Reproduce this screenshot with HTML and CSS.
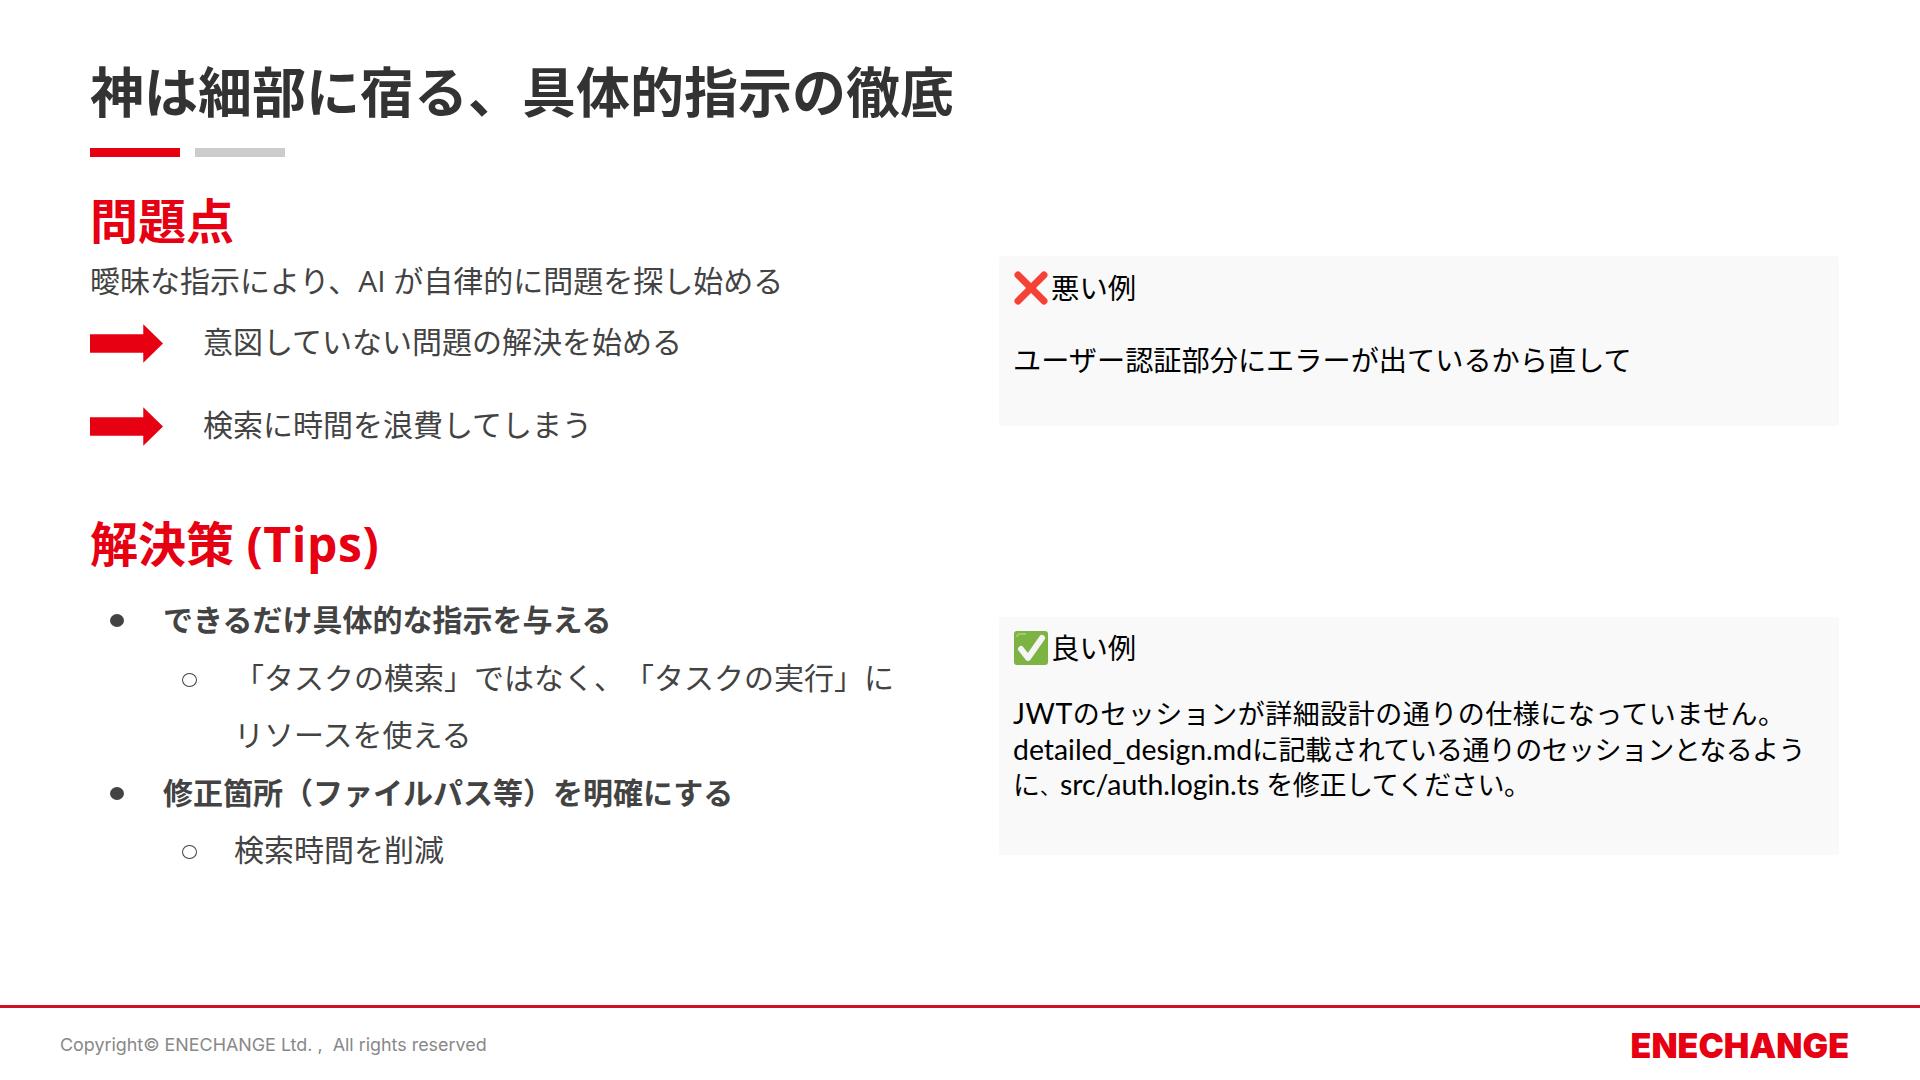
FILE: index.html
```html
<!DOCTYPE html>
<html lang="ja">
<head>
<meta charset="utf-8">
<title>神は細部に宿る、具体的指示の徹底</title>
<link rel="stylesheet" href="styles.css">
</head>
<body>
<div class="slide">
  <header class="head">
    <h1 class="title">神は細部に宿る、具体的指示の徹底</h1>
    <div class="rule"><span class="rule-red"></span><span class="rule-grey"></span></div>
  </header>
  <main class="main">
    <section class="left">
      <h2 class="heading">問題点</h2>
      <p class="lead">曖昧な指示により、AI が自律的に問題を探し始める</p>
      <div class="arrow-row">
        <svg class="arrow" viewBox="0 0 74 39"><path d="M0 10H54V0L74 19.5L54 39V29H0Z"/></svg>
        <span class="arrow-text">意図していない問題の解決を始める</span>
      </div>
      <div class="arrow-row">
        <svg class="arrow" viewBox="0 0 74 39"><path d="M0 10H54V0L74 19.5L54 39V29H0Z"/></svg>
        <span class="arrow-text">検索に時間を浪費してしまう</span>
      </div>
      <h2 class="heading heading-tips">解決策 <span class="latin-head">(Tips)</span></h2>
      <ul class="tips">
        <li class="tip-main">できるだけ具体的な指示を与える</li>
        <li class="tip-sub">「タスクの模索」ではなく、「タスクの実行」にリソースを使える</li>
        <li class="tip-main">修正箇所（ファイルパス等）を明確にする</li>
        <li class="tip-sub">検索時間を削減</li>
      </ul>
    </section>
    <section class="right">
      <div class="box box-bad">
        <div class="box-label">
          <svg class="emoji" viewBox="0 0 34 34"><path d="M4 4L30 30M30 4L4 30" fill="none" stroke="#f44336" stroke-width="7" stroke-linecap="round"/></svg>
          <span>悪い例</span>
        </div>
        <p class="box-text box-text-bad">ユーザー認証部分にエラーが出ているから直して</p>
      </div>
      <div class="box box-good">
        <div class="box-label">
          <svg class="emoji" viewBox="0 0 34 34"><rect width="34" height="34" rx="3" fill="#7cb342"/><path d="M3 6Q3 3 6 3H12" fill="none" stroke="#9ccc65" stroke-width="2"/><path d="M7 18L14 27L28 7" fill="none" stroke="#f5f5f5" stroke-width="6" stroke-linejoin="round" stroke-linecap="round"/></svg>
          <span>良い例</span>
        </div>
        <p class="box-text box-text-good"><span class="line-a"><span class="latin">JWT</span>のセッションが詳細設計の通りの仕様になっていません。</span><br><span class="latin">detailed_design.md</span><span class="line-b">に記載されている通りのセッションとなるよう</span><br>に<span class="tight">、</span><span class="latin">src/auth.login.ts</span> <span class="line-c">を修正してください。</span></p>
      </div>
    </section>
  </main>
  <footer class="foot">
    <span class="copy">Copyright© ENECHANGE Ltd. ,&nbsp; All rights reserved</span>
    <span class="logo">ENECHANGE</span>
  </footer>
</div>
</body>
</html>
```
FILE: styles.css
```css
* { box-sizing: border-box; }
html, body { margin: 0; padding: 0; background: #fff; }
.slide {
  width: 1920px;
  height: 1080px;
  display: flex;
  flex-direction: column;
  overflow: hidden;
  font-family: "Open Sans", "Noto Sans CJK JP", sans-serif;
  color: #434343;
  text-spacing-trim: space-all;
}
.head { padding: 60px 0 0 90px; }
.title {
  margin: 0;
  font-size: 54px;
  line-height: 64px;
  font-weight: 700;
  color: #333;
}
.rule { display: flex; gap: 15px; margin-top: 24px; }
.rule-red, .rule-grey { width: 90px; height: 9px; }
.rule-red { background: #e60012; }
.rule-grey { background: #ccc; }
.main {
  flex: 1;
  display: flex;
  padding: 36px 81px 0 90px;
}
.left { width: 909px; flex: none; }
.right { flex: 1; padding-top: 63px; }
.heading {
  margin: 0;
  font-size: 48px;
  line-height: 56px;
  font-weight: 700;
  color: #e60012;
}
.heading-tips { margin-top: 49px; }
.latin-head { letter-spacing: 0.6px; }
.lead {
  margin: 12px 0 0;
  font-size: 30px;
  line-height: 40px;
}
.arrow-row {
  height: 83px;
  display: flex;
  align-items: center;
  gap: 40px;
  font-size: 30px;
}
.arrow { width: 73px; height: 39px; flex: none; fill: #e60012; margin-top: 2px; }
.arrow-text { padding-bottom: 6px; }
.tips {
  list-style: none;
  margin: 19px 0 0;
  padding: 0;
  font-size: 30px;
  line-height: 57.6px;
}
.tips li { position: relative; }
.tip-main { padding-left: 73px; font-weight: 700; }
.tip-sub { padding-left: 144px; width: 820px; }
.tip-main::before, .tip-sub::before {
  content: "";
  position: absolute;
  border-radius: 50%;
}
.tip-main::before { left: 20px; top: 23px; width: 14px; height: 13px; background: #434343; }
.tip-sub::before { left: 92px; top: 24px; width: 13px; height: 12px; border: 1.5px solid #434343; }
.box {
  background: #f9f9f9;
  border-radius: 3px;
  padding: 14px 14px 0;
  color: #000;
}
.box-bad { height: 170px; }
.box-good { height: 238px; margin-top: 191px; padding-top: 13px; }
.box-label {
  display: flex;
  align-items: center;
  gap: 3px;
  font-size: 28.4px;
  line-height: 36px;
}
.emoji { width: 34px; height: 34px; flex: none; margin-left: 1px; }
.box-text {
  margin: 0;
  font-family: Lato, "Noto Sans CJK JP", sans-serif;
  font-size: 27px;
  line-height: 35.5px;
}
.box-text-bad { padding-top: 37px; font-size: 28.2px; }
.box-text-good { padding-top: 30px; white-space: nowrap; }
.latin { font-size: 28.4px; line-height: 0; }
.line-a { letter-spacing: 0.5px; }
.line-b { letter-spacing: -0.6px; }
.line-c { letter-spacing: -0.4px; }
.tight { font-size: 20px; line-height: 0; }
.foot {
  height: 75px;
  border-top: 3px solid #cf1128;
  display: flex;
  align-items: center;
  justify-content: space-between;
  padding: 0 71px 0 60px;
}
.copy { font-family: Inter, sans-serif; font-size: 17.9px; color: #888; }
.logo {
  font-family: Inter, sans-serif;
  font-size: 34px;
  font-weight: 900;
  color: #e60012;
  padding-top: 2px;
}
```
